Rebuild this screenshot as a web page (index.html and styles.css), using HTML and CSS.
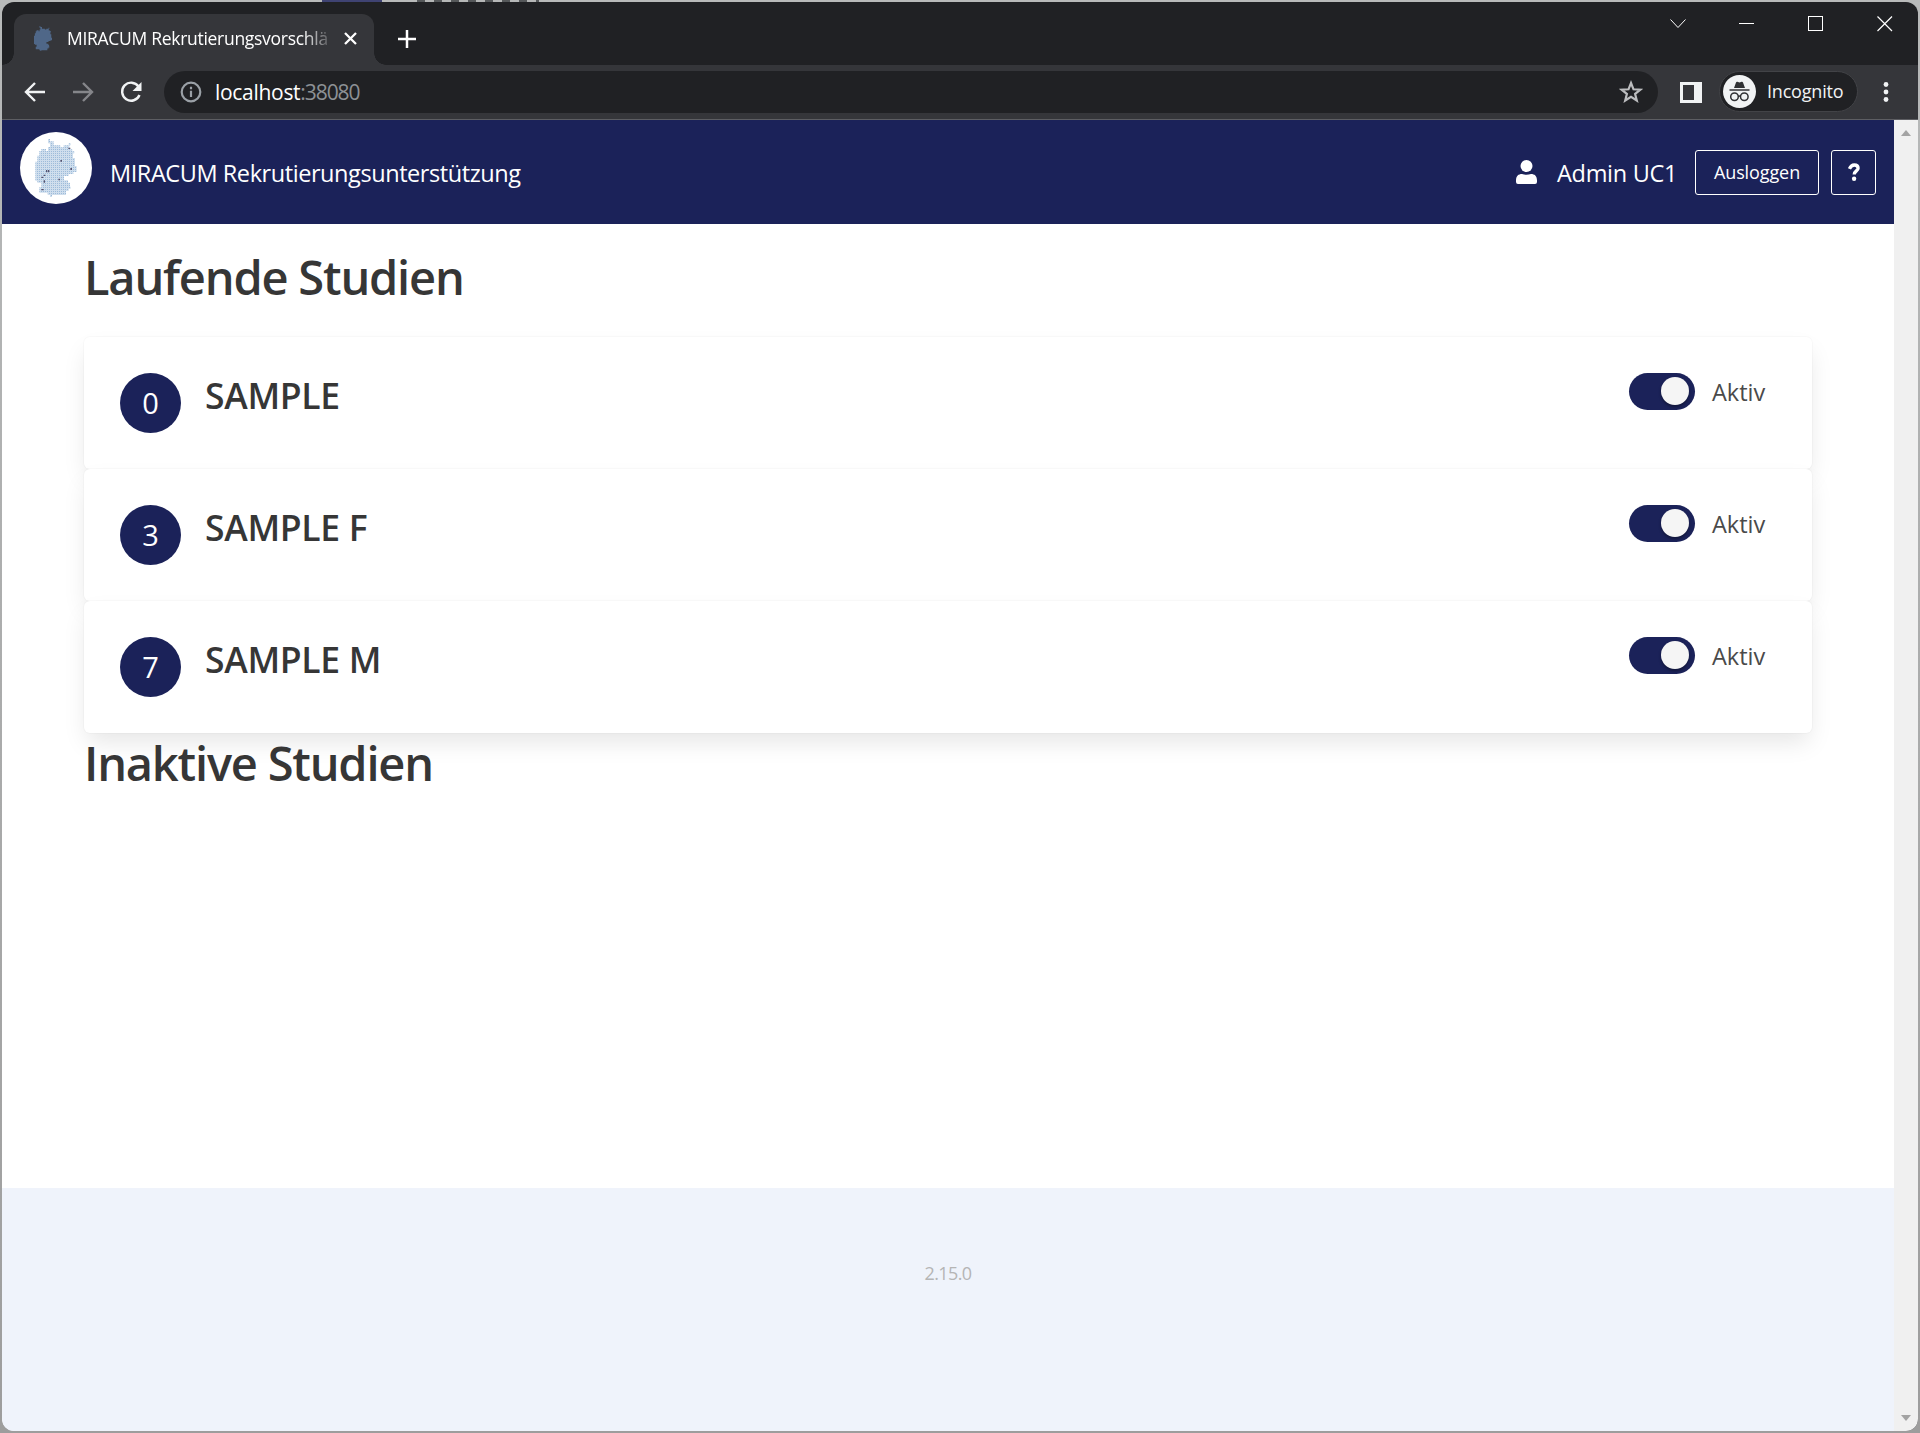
FILE: index.html
```html
<!DOCTYPE html>
<html lang="de">
<head>
<meta charset="utf-8">
<title>MIRACUM Rekrutierungsvorschläge</title>
<link rel="stylesheet" href="styles.css">
</head>
<body>
<svg width="0" height="0" class="defs" aria-hidden="true">
  <defs>
    <path id="germany" d="M144 117H150V124H161V136H181V142H191V136H206V130H212V136H208V148H217V154H223V160H219V174H225V198H230V216H220V222H206V228H192V241H204V248H210V260H212V266H206V273H198V285H156V291H150V285H143V278H118V262H124V248H112V242H106V185H112V167H118V153H124V147H138V153H144V141H150V130H144Z"/>
  </defs>
</svg>
<div class="window">
  <div class="tabstrip">
    <div class="tab">
      <svg class="favicon" viewBox="106 117 124 174" preserveAspectRatio="none"><use href="#germany"/></svg>
      <span class="tab-title">MIRACUM Rekrutierungsvorschlä</span>
      <svg class="tab-close" viewBox="0 0 13 13"><path d="M1 1l11 11M12 1L1 12"/></svg>
    </div>
    <svg class="new-tab" viewBox="0 0 18 18"><path d="M9 0v18M0 9h18"/></svg>
    <div class="controls">
      <svg viewBox="0 0 16 16"><path d="M.5 3.500l7.500 8 7.500-8" stroke-width="1"/></svg>
      <svg viewBox="0 0 16 16"><path d="M0 7.500h15" class="crisp"/></svg>
      <svg viewBox="0 0 16 16"><path d="M.5 .5h14v14h-14z" class="crisp"/></svg>
      <svg viewBox="0 0 16 16"><path d="M.5 .5l14.500 14.500M15 .5L.5 15"/></svg>
    </div>
  </div>
  <div class="toolbar">
    <svg class="nav back" viewBox="0 0 22 22"><path d="M21 11H2.500M11 2L2 11l9 9"/></svg>
    <svg class="nav forward" viewBox="0 0 22 22"><path d="M1 11h18.500M11 2l9 9-9 9"/></svg>
    <svg class="nav reload" viewBox="0 0 22 22"><path d="M18.500 5.500A9 9 0 1 0 19.500 14"/><path class="solid" d="M21.500 1v9h-9z"/></svg>
    <div class="omnibox">
      <svg class="info" viewBox="0 0 22 22"><circle cx="11" cy="11" r="9.300"/><path d="M11 9.800v6.200M11 5.800v2.400"/></svg>
      <span class="host">localhost</span><span class="port">:38080</span>
      <svg class="star" viewBox="0 0 24 24"><path d="M12 3l2.500 6.300 6.800.4-5.200 4.300 1.700 6.500-5.800-3.600-5.800 3.600 1.700-6.500-5.200-4.300 6.800-.4z"/></svg>
    </div>
    <svg class="panel" viewBox="0 0 22 21"><path fill-rule="evenodd" d="M0 0h22v21H0zM3 3v15h11V3z"/></svg>
    <div class="incognito">
      <svg viewBox="0 0 33 33">
        <circle cx="16.500" cy="16.500" r="16.500" fill="#f1f3f4"/>
        <path d="M11 13l2-5.500q.4-1 1.400-.7l2.100.6 2.100-.6q1-.3 1.400.7L22 13z" fill="#303134"/>
        <path d="M6.500 14.900h20" stroke="#303134" stroke-width="1.500"/>
        <g fill="none" stroke="#303134" stroke-width="1.500"><circle cx="11.500" cy="21.700" r="3.800"/><circle cx="21.300" cy="21.700" r="3.800"/><path d="M15.200 21.500q1.200-1 2.400 0"/></g>
      </svg>
      <span>Incognito</span>
    </div>
    <svg class="menu" viewBox="0 0 6 20"><circle cx="3" cy="2.500" r="2.400"/><circle cx="3" cy="10" r="2.400"/><circle cx="3" cy="17.500" r="2.400"/></svg>
  </div>
  <div class="viewport">
    <div class="page">
      <header class="navbar">
        <svg class="logo" viewBox="60 96 216 216">
          <defs><pattern id="grid" width="6" height="6" patternUnits="userSpaceOnUse"><rect width="6" height="6" fill="#9dbbda"/><path d="M0 1.500h6M1.500 0v6" stroke="#cfdeed" stroke-width="3"/></pattern></defs>
          <circle cx="168" cy="204" r="108" fill="#fff"/>
          <use href="#germany" fill="url(#grid)"/>
          <g fill="#56536f"><path d="M205 143h6v4h-6zM181 180h5v5h-5zM211 204h5v6h-5zM138 210h4v7h-4zM144 210h4v7h-4zM131 224h5v4h-5zM124 230h6v4h-6zM131 241h4v7h-4zM175 236h5v5h-5zM124 267h7v4h-7z"/></g>
        </svg>
        <span class="brand">MIRACUM Rekrutierungsunterstützung</span>
        <svg class="user" viewBox="0 0 21 24"><circle cx="10.500" cy="6" r="6"/><path d="M0 20.500C0 16 2.500 14 6 14q4.500 1.500 9 0c3.500 0 6 2 6 6.500V22q0 2-2 2H2q-2 0-2-2z"/></svg>
        <span class="username">Admin UC1</span>
        <button class="btn logout">Ausloggen</button>
        <button class="btn help" aria-label="Hilfe"><svg viewBox="0 0 12 18"><path d="M1.500 5.800C2.600 3.300 4 2 6.200 2c2.300 0 3.900 1.200 3.900 3.200 0 2.700-3.900 2.700-3.900 6.300" fill="none" stroke="#fff" stroke-width="3.300"/><circle cx="6.100" cy="15.700" r="2.200" fill="#fff"/></svg></button>
      </header>
      <main class="content">
        <h1>Laufende Studien</h1>
        <section class="cards">
          <article class="card"><span class="count">0</span><h2>SAMPLE</h2><span class="switch"></span><span class="state">Aktiv</span></article>
          <article class="card"><span class="count">3</span><h2>SAMPLE F</h2><span class="switch"></span><span class="state">Aktiv</span></article>
          <article class="card"><span class="count">7</span><h2>SAMPLE M</h2><span class="switch"></span><span class="state">Aktiv</span></article>
        </section>
        <h1 class="inactive">Inaktive Studien</h1>
      </main>
      <footer class="footer">2.15.0</footer>
    </div>
    <div class="scrollbar"><span class="up"></span><span class="down"></span></div>
  </div>
</div>
</body>
</html>
```
FILE: styles.css
```css
* { box-sizing: border-box; }

body {
  margin: 0;
  width: 1920px;
  height: 1433px;
  padding: 2px;
  overflow: hidden;
  font-family: "Open Sans", "Noto Sans", sans-serif;
  /* strip of the desktop behind the window */
  background:
    linear-gradient(#3f4373, #3f4373) 322px 0 / 60px 2px no-repeat,
    repeating-linear-gradient(90deg, #55585a 0 8px, #b5b7b7 8px 17px) 417px 0 / 122px 2px no-repeat,
    linear-gradient(#b8baba, #9d9d9d);
}

svg { flex: none; display: block; }
.defs { display: none; }

.window {
  height: 1429px;
  display: flex;
  flex-direction: column;
  border-radius: 12px;
  overflow: hidden;
  background: #202124;
}

/* tab strip */
.tabstrip {
  height: 63px;
  display: flex;
  padding: 12px 25px 0 12px;
}
.tab {
  position: relative;
  width: 360px;
  height: 51px;
  display: flex;
  align-items: center;
  padding: 0 17px 3px 20px;
  border-radius: 12px 12px 0 0;
  background: #35363a;
}
.tab::before, .tab::after {
  content: "";
  position: absolute;
  bottom: 0;
  width: 12px;
  height: 12px;
}
.tab::before { left: -12px; background: radial-gradient(circle at 0 0, transparent 11.5px, #35363a 12px); }
.tab::after { right: -12px; background: radial-gradient(circle at 100% 0, transparent 11.5px, #35363a 12px); }
.favicon { width: 18px; height: 25px; fill: #4f6788; }
.tab-title {
  width: 263px;
  margin-left: 15px;
  overflow: hidden;
  white-space: nowrap;
  font-size: 17.5px;
  line-height: 26px;
  letter-spacing: -.29px;
  color: #fff;
  -webkit-mask-image: linear-gradient(90deg, #000 235px, transparent 268px);
  mask-image: linear-gradient(90deg, #000 235px, transparent 268px);
}
.tab-close { width: 13px; height: 13px; margin-left: 14px; stroke: #fff; stroke-width: 2.3; }
.new-tab { width: 18px; height: 18px; margin: 16px 0 0 24px; stroke: #fff; stroke-width: 2.5; }
.controls { display: flex; gap: 53px; margin: 2px 0 0 auto; }
.controls svg { width: 16px; height: 16px; fill: none; stroke: #fff; stroke-width: 1.2; }
.controls .crisp { shape-rendering: crispEdges; stroke-width: 1; }

/* toolbar */
.toolbar {
  height: 55px;
  display: flex;
  align-items: center;
  padding: 0 29px 0 22px;
  background: #35363a;
  border-bottom: 1px solid #5d5e62;
}
.nav { width: 22px; height: 22px; margin-top: -1px; fill: none; stroke: #f1f3f4; stroke-width: 2.4; }
.forward { margin-left: 26px; stroke: #85868a; }
.reload { margin-left: 26px; }
.reload .solid { fill: #f1f3f4; stroke: none; }
.omnibox {
  width: 1494px;
  height: 42px;
  display: flex;
  align-items: center;
  margin-left: 22px;
  padding: 0 15px 0 16px;
  border-radius: 21px;
  background: #202124;
  font-size: 21px;
  line-height: 30px;
}
.info { width: 22px; height: 22px; fill: none; stroke: #9aa0a6; stroke-width: 2.2; }
.host { margin-left: 13px; letter-spacing: -.3px; color: #fff; }
.port { letter-spacing: -1.05px; color: #8d9195; }
.star { width: 24px; height: 24px; margin-left: auto; fill: none; stroke: #bcbdbf; stroke-width: 2.2; }
.panel { width: 22px; height: 21px; margin-left: 22px; fill: #f1f3f4; }
.incognito {
  width: 139px;
  height: 41px;
  display: flex;
  align-items: center;
  margin: -1px 0 0 17px;
  padding-left: 3px;
  border: 1px solid #424347;
  border-radius: 21px;
  background: #202124;
  color: #f1f3f4;
  font-size: 18px;
  letter-spacing: -.2px;
  line-height: 26px;
}
.incognito svg { width: 33px; height: 33px; }
.incognito span { margin: -1px 0 0 11px; }
.menu { width: 6px; height: 20px; margin: -1px 0 0 auto; fill: #f1f3f4; }

/* viewport */
.viewport { flex: 1; display: flex; min-height: 0; }
.page { flex: 1; display: flex; flex-direction: column; background: #fff; }
.scrollbar {
  width: 24px;
  display: flex;
  flex-direction: column;
  justify-content: space-between;
  align-items: center;
  padding: 10px 0;
  background: #f0f0f0;
}
.scrollbar span { border: solid transparent; border-width: 0 5.5px; }
.scrollbar .up { border-bottom: 6px solid #a3a3a3; }
.scrollbar .down { border-top: 6px solid #a3a3a3; }

/* application header */
.navbar {
  height: 104px;
  display: flex;
  align-items: center;
  padding: 0 18px;
  background: #1b2259;
  color: #fff;
  font-size: 23.5px;
  line-height: 36px;
}
.logo { width: 72px; height: 72px; margin-top: -8px; }
.brand { margin: 2px auto 0 18px; letter-spacing: -.43px; white-space: nowrap; }
.user { width: 21px; height: 24px; fill: #fff; }
.username { width: 119px; margin: 2px 0 0 20px; letter-spacing: -.3px; white-space: nowrap; }
.btn {
  height: 45px;
  display: flex;
  align-items: center;
  justify-content: center;
  padding: 0;
  border: 1px solid #fff;
  border-radius: 3px;
  background: none;
  color: #fff;
  font: 18px/26px "Open Sans", "Noto Sans", sans-serif;
}
.logout { width: 124px; margin-left: 19px; letter-spacing: -.1px; }
.help { width: 45px; margin-left: 12px; }
.help svg { width: 12px; height: 18px; margin-top: -1px; }

/* studies */
.content { flex: 1; padding: 24px 82px 0; }
h1, h2 { margin: 0; color: #363636; font-weight: 560; white-space: nowrap; }
h1 { height: 54px; margin-bottom: 35px; font-size: 47px; line-height: 58px; letter-spacing: -1.2px; }
.inactive { margin: 1px 0 0; }
h2 { flex: 1; margin-left: 24px; font-size: 35.5px; line-height: 44px; letter-spacing: -.3px; }
.card {
  height: 132px;
  display: flex;
  align-items: flex-start;
  padding: 36px;
  border-radius: 6px;
  background: #fff;
  box-shadow: 0 12px 24px -3px rgba(10, 10, 10, .1), 0 0 0 1px rgba(10, 10, 10, .02);
}
.count {
  width: 61px;
  height: 60px;
  border-radius: 50%;
  background: #1b2259;
  color: #fff;
  font-size: 29px;
  line-height: 60px;
  text-align: center;
}
.switch {
  width: 66px;
  height: 37px;
  padding: 4px 6px 0 32px;
  border-radius: 19px;
  background: #1b2259;
}
.switch::after {
  content: "";
  display: block;
  width: 28px;
  height: 28px;
  border-radius: 50%;
  background: #f5f5f5;
  box-shadow: 0 2px 3px rgba(0, 0, 0, .35);
}
.state {
  width: 64px;
  margin-left: 17px;
  color: #4a4a4a;
  font-size: 23.5px;
  line-height: 38px;
}

.footer {
  height: 243px;
  padding-top: 72px;
  background: #eff3fb;
  color: #b5b5b5;
  font-size: 18px;
  line-height: 26px;
  letter-spacing: -.6px;
  text-align: center;
}
```
